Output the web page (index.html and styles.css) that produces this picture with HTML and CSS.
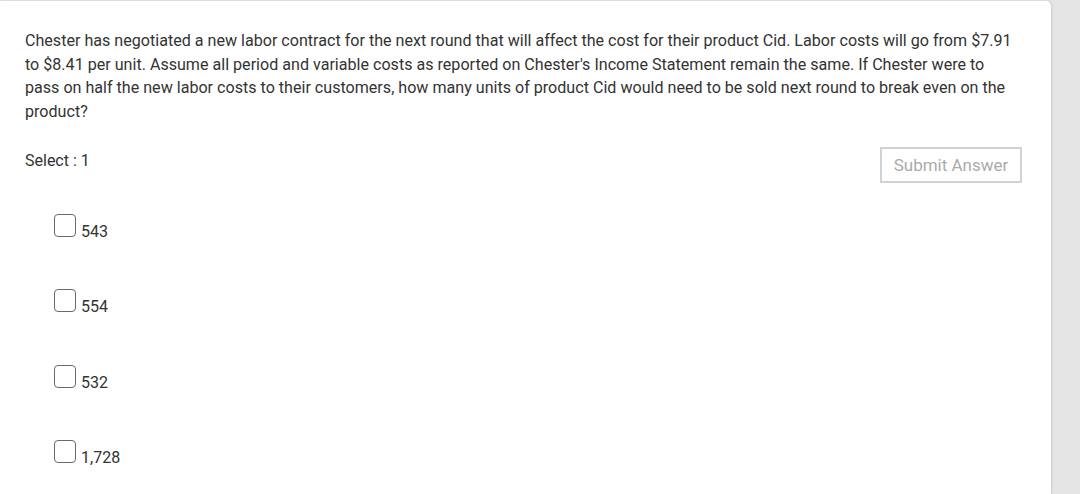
FILE: index.html
```html
<!DOCTYPE html>
<html>
<head>
<meta charset="utf-8">
<link rel="stylesheet" href="styles.css">
</head>
<body>
<div class="page">
  <div class="card">
    <p class="question">Chester has negotiated a new labor contract for the next round that will affect the cost for their product Cid. Labor costs will go from $7.91 to $8.41 per unit. Assume all period and variable costs as reported on Chester's Income Statement remain the same. If Chester were to pass on half the new labor costs to their customers, how many units of product Cid would need to be sold next round to break even on the product?</p>
    <div class="select-row">
      <span class="select-label">Select : 1</span>
      <button class="submit">Submit Answer</button>
    </div>
    <ul class="options">
      <li class="option"><span class="box"></span><span class="label">543</span></li>
      <li class="option"><span class="box"></span><span class="label">554</span></li>
      <li class="option"><span class="box"></span><span class="label">532</span></li>
      <li class="option"><span class="box"></span><span class="label">1,728</span></li>
    </ul>
  </div>
</div>
</body>
</html>
```
FILE: styles.css
```css
html, body {
  margin: 0;
  padding: 0;
  height: 100%;
  background: #e5e5e5;
  font-family: Roboto, "Liberation Sans", sans-serif;
  color: #333;
  overflow: hidden;
}
.page {
  padding-top: 1px;
  height: 100%;
  box-sizing: border-box;
}
.card {
  width: 1051px;
  height: 100%;
  background: #fff;
  border-top-right-radius: 5px;
  box-shadow: 1px 0 2px rgba(0,0,0,0.12);
  box-sizing: border-box;
  padding: 28px 0 0 25px;
}
.question {
  margin: 0;
  width: 988px;
  font-size: 16.1px;
  line-height: 23.7px;
  color: #333;
}
.select-row {
  display: flex;
  justify-content: space-between;
  align-items: flex-start;
  margin-top: 23px;
  padding-right: 29px;
}
.select-label {
  font-size: 16px;
  line-height: 20px;
  margin-top: 4px;
  color: #333;
}
.submit {
  width: 142px;
  height: 36px;
  background: #fff;
  border: 2px solid #d2d2d2;
  font-family: Roboto, "Liberation Sans", sans-serif;
  font-size: 17px;
  color: #aaa;
  padding: 0;
}
.options {
  list-style: none;
  margin: 30px 0 0 29px;
  padding: 0;
  display: flex;
  flex-direction: column;
  gap: 51.4px;
}
.option {
  display: flex;
  align-items: flex-end;
  height: 24px;
}
.box {
  width: 20px;
  height: 21px;
  border: 1.5px solid #6a6a6a;
  border-radius: 4px;
  flex: none;
}
.label {
  font-size: 16px;
  line-height: 16px;
  margin-left: 5px;
  margin-bottom: -3px;
  color: #333;
}
```
